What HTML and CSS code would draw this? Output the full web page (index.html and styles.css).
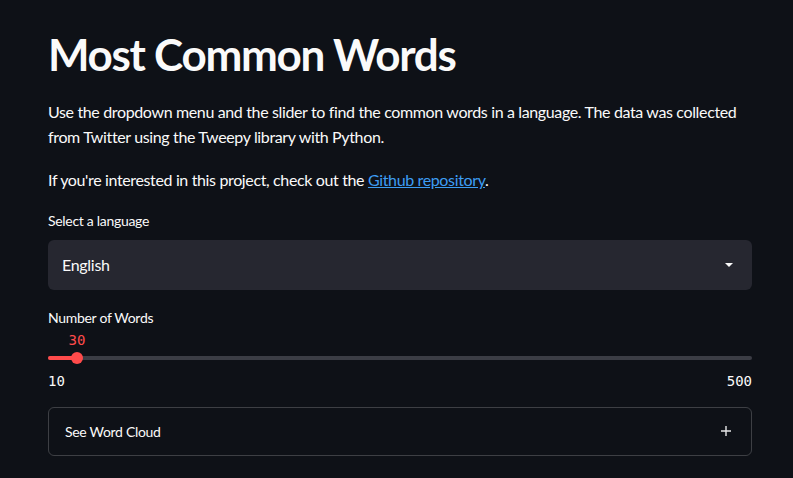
FILE: index.html
```html
<!DOCTYPE html>
<html>
<head>
<meta charset="utf-8">
<link rel="stylesheet" href="styles.css">
</head>
<body>
<main class="main">
  <h1 class="title">Most Common Words</h1>
  <p class="para">Use the dropdown menu and the slider to find the common words in a language. The data was collected from Twitter using the Tweepy library with Python.</p>
  <p class="para para-link">If you're interested in this project, check out the <a href="#" class="link">Github repository</a>.</p>

  <div class="widget">
    <label class="label">Select a language</label>
    <div class="select">
      <span class="select-value">English</span>
      <svg class="caret" width="10" height="6" viewBox="0 0 10 6"><path d="M1 1h8L5 5z" fill="#fafafa"/></svg>
    </div>
  </div>

  <div class="widget slider-widget">
    <label class="label">Number of Words</label>
    <div class="slider">
      <div class="slider-value" style="left: 4.12%">30</div>
      <div class="track">
        <div class="fill" style="width: 4.12%"></div>
        <div class="thumb" style="left: 4.12%"></div>
      </div>
      <div class="ticks"><span>10</span><span>500</span></div>
    </div>
  </div>

  <div class="expander">
    <span class="expander-title">See Word Cloud</span>
    <svg class="plus" width="12" height="12" viewBox="0 0 12 12"><path d="M6 1v10M1 6h10" stroke="#e6e6e8" stroke-width="1.4"/></svg>
  </div>
</main>
</body>
</html>
```
FILE: styles.css
```css
* { box-sizing: border-box; }
html, body {
  margin: 0;
  padding: 0;
  background: #0e1117;
  color: #fafafa;
  font-family: "Lato", "Noto Sans", sans-serif;
}
.main {
  width: 704px;
  margin-left: 48px;
  padding-top: 22px;
}
.title {
  font-size: 44px;
  font-weight: 700;
  margin: 0;
  line-height: 1.2;
  letter-spacing: -1.3px;
  padding: 6px 0 18px;
}
.para {
  font-size: 16px;
  line-height: 25.6px;
  margin: 0 0 17px;
  letter-spacing: -0.36px;
}
.para-link { margin-bottom: 18px; }
.link { color: #3d9df3; text-decoration: underline; }
.widget { display: flex; flex-direction: column; }
.label {
  font-size: 14px;
  line-height: 20px;
  margin-bottom: 9px;
  letter-spacing: -0.3px;
}
.select {
  height: 50px;
  background: #262730;
  border-radius: 6px;
  display: flex;
  align-items: center;
  justify-content: space-between;
  padding: 0 18px 0 14px;
}
.select-value { font-size: 16px; letter-spacing: -0.3px; }
.slider-widget { margin-top: 18px; }
.slider-widget .label { margin-bottom: 4px; }
.slider {
  position: relative;
  padding-top: 24px;
}
.slider-value {
  position: absolute;
  top: 0;
  transform: translateX(-50%);
  color: #ff4b4b;
  font-family: "DejaVu Sans Mono", monospace;
  font-size: 14px;
  line-height: 16px;
}
.track {
  position: relative;
  height: 4px;
  background: #3b3d45;
  border-radius: 2px;
}
.fill {
  height: 4px;
  background: #ff4b4b;
  border-radius: 2px;
}
.thumb {
  position: absolute;
  top: -4px;
  width: 12px;
  height: 12px;
  margin-left: -6px;
  border-radius: 50%;
  background: #ff4b4b;
}
.ticks {
  display: flex;
  justify-content: space-between;
  font-family: "DejaVu Sans Mono", monospace;
  font-size: 14px;
  line-height: 16px;
  margin-top: 13px;
}
.expander {
  margin-top: 18px;
  height: 49px;
  border: 1px solid rgba(250, 250, 250, 0.2);
  border-radius: 6px;
  display: flex;
  align-items: center;
  justify-content: space-between;
  padding: 0 19px 0 16px;
}
.expander-title { font-size: 14px; letter-spacing: -0.3px; }
```
